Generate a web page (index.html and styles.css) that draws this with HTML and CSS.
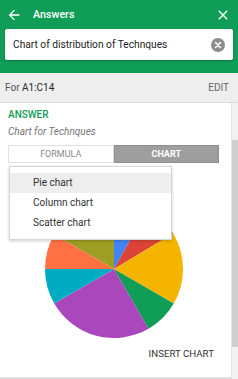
FILE: index.html
```html
<!DOCTYPE html>
<html>
<head>
<meta charset="utf-8">
<link rel="stylesheet" href="styles.css">
</head>
<body>
<div class="app">
  <header class="header">
    <div class="topbar">
      <svg class="icon-back" viewBox="0 0 24 24" width="16" height="16"><path fill="#fff" d="M20 11H7.83l5.59-5.59L12 4l-8 8 8 8 1.41-1.41L7.83 13H20v-2z"/></svg>
      <span class="title">Answers</span>
      <svg class="icon-close" viewBox="0 0 24 24" width="16" height="16"><path fill="#fff" d="M19 6.41L17.59 5 12 10.59 6.41 5 5 6.41 10.59 12 5 17.59 6.41 19 12 13.41 17.59 19 19 17.59 13.41 12z"/></svg>
    </div>
    <div class="search">
      <span class="query">Chart of distribution of Technques</span>
      <svg class="clear" viewBox="0 0 14 14" width="14" height="14"><circle cx="7" cy="7" r="7" fill="#8c8c8c"/><path d="M4.5 4.5l5 5M9.5 4.5l-5 5" stroke="#fff" stroke-width="1.6" stroke-linecap="round"/></svg>
    </div>
  </header>
  <div class="rangebar">
    <span class="range">For <span class="cells">A1:C14</span></span>
    <span class="edit">EDIT</span>
  </div>
  <div class="main">
    <div class="card">
      <div class="label">ANSWER</div>
      <div class="subtitle">Chart for Technques</div>
      <div class="tabs">
        <div class="tab">FORMULA</div>
        <div class="tab active">CHART</div>
      </div>
      <div class="chart-area">
        <svg class="pie" viewBox="0 0 138 138" width="138" height="138">
          <path fill="#4285F4" d="M69 69L69 0A69 69 0 0 1 102.45 8.65Z"/>
          <path fill="#DB4437" d="M69 69L102.45 8.65A69 69 0 0 1 128.15 33.46Z"/>
          <path fill="#F4B400" d="M69 69L128.15 33.46A69 69 0 0 1 128.76 103.5Z"/>
          <path fill="#0F9D58" d="M69 69L128.76 103.5A69 69 0 0 1 103.5 128.76Z"/>
          <path fill="#AB47BC" d="M69 69L103.5 128.76A69 69 0 0 1 9.24 103.5Z"/>
          <path fill="#00ACC1" d="M69 69L9.24 103.5A69 69 0 0 1 0 69Z"/>
          <path fill="#FF7043" d="M69 69L0 69A69 69 0 0 1 9.24 34.5Z"/>
          <path fill="#9E9D24" d="M69 69L9.24 34.5A69 69 0 0 1 69 0Z"/>
        </svg>
        <ul class="menu">
          <li class="item selected">Pie chart</li>
          <li class="item">Column chart</li>
          <li class="item">Scatter chart</li>
        </ul>
      </div>
      <div class="actions">
        <span class="insert">INSERT CHART</span>
      </div>
    </div>
    <div class="scrollbar"><div class="thumb"></div></div>
  </div>
</div>
</body>
</html>
```
FILE: styles.css
```css
* { box-sizing: border-box; }
html, body { margin: 0; padding: 0; }
body {
  width: 238px;
  height: 379px;
  overflow: hidden;
  font-family: Roboto, "Liberation Sans", sans-serif;
  background: #eeeeee;
}
.app {
  display: flex;
  flex-direction: column;
  height: 379px;
}
.header {
  background: #0F9D58;
  height: 73px;
  padding: 0 5px 13px 5px;
}
.topbar {
  height: 29px;
  display: flex;
  align-items: center;
  padding: 0 2px 0 1px;
}
.icon-back { display: block; }
.title {
  color: #fff;
  font-size: 10.7px;
  font-weight: 500;
  margin-left: 11px;
  flex: 1;
}
.icon-close { display: block; }
.search {
  height: 31px;
  background: #fff;
  border-radius: 2px;
  box-shadow: 0 1px 2px rgba(0,0,0,0.25);
  display: flex;
  align-items: center;
  padding: 0 8px 0 8px;
}
.query {
  flex: 1;
  font-size: 10.2px;
  color: #222;
}
.clear { display: block; }
.rangebar {
  height: 30px;
  display: flex;
  align-items: center;
  justify-content: space-between;
  padding: 0 9px 0 5px;
  font-size: 10px;
  color: #555;
  background: #eeeeee;
  border-bottom: 1px solid #dcdcdc;
}
.cells { color: #2a2a2a; }
.edit { color: #666; }
.main {
  flex: 1;
  display: flex;
  min-height: 0;
}
.card {
  width: 232px;
  background: #fff;
  border-right: 1px solid #e2e2e2;
  border-bottom: 2px solid #e0e0e0;
  padding: 5px 12px 0 8px;
  display: flex;
  flex-direction: column;
}
.label {
  font-size: 10px;
  line-height: 14px;
  font-weight: 500;
  color: #0F9D58;
}
.subtitle {
  margin-top: 3px;
  font-size: 10px;
  line-height: 14px;
  font-style: italic;
  color: #757575;
}
.tabs {
  margin-top: 6px;
  display: flex;
  height: 18px;
}
.tab {
  flex: 1;
  display: flex;
  align-items: center;
  justify-content: center;
  font-size: 9px;
  color: #8a8a8a;
  border: 1px solid #e0e0e0;
}
.tab.active {
  background: #9e9e9e;
  border-color: #8f8f8f;
  color: #fff;
  font-weight: 700;
}
.chart-area {
  position: relative;
  display: flex;
  justify-content: center;
  padding-top: 37px;
}
.pie { display: block; }
.menu {
  position: absolute;
  left: 1px;
  top: 3px;
  width: 163px;
  margin: 0;
  padding: 6px 0;
  list-style: none;
  background: #fff;
  border: 1px solid #d6d6d6;
  box-shadow: 0 1px 3px rgba(0,0,0,0.2);
}
.item {
  height: 20px;
  line-height: 20px;
  padding-left: 23px;
  font-size: 10px;
  color: #333;
}
.item.selected { background: #eeeeee; }
.actions {
  margin-top: 9px;
  display: flex;
  justify-content: flex-end;
  padding-right: 5px;
}
.insert {
  font-size: 9.7px;
  line-height: 14px;
  font-weight: 400;
  color: #333;
}
.scrollbar {
  width: 6px;
  background: #f2f2f2;
  padding-top: 37px;
}
.thumb {
  height: 207px;
  background: #cfcfcf;
}
```
